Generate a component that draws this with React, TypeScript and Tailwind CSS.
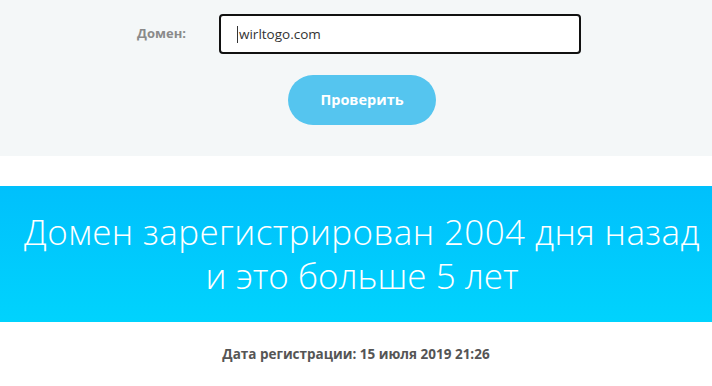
import React from "react";

export default function App() {
  return (
    <div className="w-[712px] h-[386px] overflow-hidden bg-white" style={{ fontFamily: '"Open Sans", "Noto Sans", sans-serif' }}>
      <div className="h-[156px] bg-[#f4f7f8] pt-[14px]">
        <div className="flex items-center">
          <div className="w-[186px] text-right text-[13px] font-bold text-[#8a8a8a]">Домен:</div>
          <div className="ml-[33px] w-[362px] h-[40px] border-2 border-[#111] rounded-[4px] bg-white flex items-center pl-[16px] text-[13.5px] text-[#333]">
            <span className="w-px h-[17px] bg-[#333] mr-px" />
            wirltogo.com
          </div>
        </div>
        <div className="mt-[21px] flex justify-center pl-[12px]">
          <button className="w-[148px] h-[50px] rounded-full bg-[#55c5ef] text-white text-[14.5px] font-bold">Проверить</button>
        </div>
      </div>
      <div className="h-[30px]" />
      <div className="h-[136px] pl-[12px] bg-gradient-to-b from-[#00c0fc] to-[#00d3fd] flex flex-col items-center justify-center text-white text-[35px] tracking-[0.4px] font-light leading-[44px] text-center">
        <div>Домен зарегистрирован 2004 дня назад</div>
        <div className="tracking-[0px]">и это больше 5 лет</div>
      </div>
      <div className="pt-[22px] text-center text-[13.5px] font-bold text-[#555]">Дата регистрации: 15 июля 2019 21:26</div>
    </div>
  );
}
